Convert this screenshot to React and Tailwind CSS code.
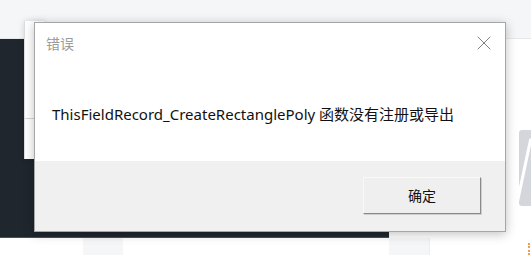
import { X } from 'lucide-react';

const font = { fontFamily: '"Noto Sans", "Noto Sans CJK SC", sans-serif' };

function Backdrop() {
  return (
    <div className="flex flex-col w-full h-full">
      <div className="h-[39px] bg-[#f5f6f8] border-b border-[#e6e8eb]" />
      <div className="flex h-[199px]">
        <div className="w-[389px] bg-[#1f262e] border-b border-[#4a5159]" />
        <div className="flex-1 bg-white flex justify-end items-start pt-[91px]">
          <div className="relative w-[12px] h-[76px] bg-[#d3d7dc] overflow-hidden rounded-l-[3px]">
            <div className="absolute left-[3px] top-[8px] w-[3px] h-[70px] bg-white rotate-[12deg]" />
          </div>
        </div>
      </div>
      <div className="flex-1 bg-white flex">
        <div className="w-[83px]" />
        <div className="w-[40px] bg-[#f5f6f8]" />
        <div className="w-[266px]" />
        <div className="w-[41px] bg-[#f5f6f8] border-r border-[#eceef0]" />
        <div className="flex-1 flex justify-end pr-[1px] pt-[5px]">
          <div className="w-[2px] h-[12px] border-l-2 border-dotted border-[#f0a050]" />
        </div>
      </div>
    </div>
  );
}

export default function App() {
  return (
    <div className="relative w-[531px] h-[255px] overflow-hidden bg-white" style={font}>
      <Backdrop />

      {/* panel behind the dialog */}
      <div className="absolute left-[24px] top-[21px] w-[20px] h-[138px] bg-white border-l border-[#dcdcdc] shadow-[0_0_6px_rgba(0,0,0,0.15)]">
        <div className="mt-[97px] h-px bg-[#d6d6d6]" />
      </div>

      {/* dialog */}
      <div className="absolute left-[34px] top-[22px] w-[472px] h-[210px] flex flex-col border border-[#a6a6a6] bg-white shadow-[0_2px_10px_rgba(0,0,0,0.25)]">
        <div className="flex items-start justify-between h-[138px]">
          <div className="flex flex-col">
            <div className="pl-[11px] pt-[11px] text-[14px] leading-[20px] text-[#9b9b9b]">错误</div>
            <div className="pl-[17px] pt-[49px] text-[15px] leading-[22px] text-[#111]">
              ThisFieldRecord_CreateRectanglePoly 函数没有注册或导出
            </div>
          </div>
          <div className="pt-[8px] pr-[9px]">
            <X className="w-[24px] h-[24px] text-[#808080]" strokeWidth={1} />
          </div>
        </div>
        <div className="flex-1 bg-[#f0f0f0] flex justify-end items-start pt-[16px] pr-[24px]">
          <button className="w-[118px] h-[37px] bg-[#efefef] border border-t-[#f8f8f8] border-l-[#f8f8f8] border-r-[#8a8a8a] border-b-[#8a8a8a] shadow-[1px_1px_0_#cfcfcf] text-[14px] text-[#111] flex items-center justify-center">
            确定
          </button>
        </div>
      </div>
    </div>
  );
}
